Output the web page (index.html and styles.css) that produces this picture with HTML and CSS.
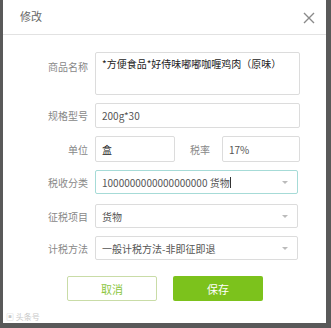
FILE: index.html
```html
<!DOCTYPE html>
<html>
<head>
    <meta charset="UTF-8">
    <title>修改</title>
    <link rel="stylesheet" href="styles.css">
</head>
<body>
    <div class="dialog">
        <div class="dialog-header">
            <span class="dialog-title">修改</span>
            <svg class="close" width="12" height="12" viewBox="0 0 12 12">
                <path d="M1 1 L11 11 M11 1 L1 11" stroke="#8a8a8a" stroke-width="1.4" fill="none"/>
            </svg>
        </div>

        <div class="form">
            <div class="row row-name">
                <label class="label">商品名称</label>
                <div class="field textarea">*方便食品*好侍味嘟嘟咖喱鸡肉（原味）</div>
            </div>

            <div class="row row-spec">
                <label class="label">规格型号</label>
                <div class="field">200g*30</div>
            </div>

            <div class="row row-unit">
                <label class="label">单位</label>
                <div class="split">
                    <div class="field unit">盒</div>
                    <label class="label-inline">税率</label>
                    <div class="field rate">17%</div>
                </div>
            </div>

            <div class="row row-class">
                <label class="label">税收分类</label>
                <div class="field select focus">1000000000000000000 货物<span class="cursor"></span><span class="caret"></span></div>
            </div>

            <div class="row row-item">
                <label class="label">征税项目</label>
                <div class="field select">货物<span class="caret"></span></div>
            </div>

            <div class="row row-method">
                <label class="label">计税方法</label>
                <div class="field select">一般计税方法-非即征即退<span class="caret"></span></div>
            </div>
        </div>

        <div class="actions">
            <a href="#" class="btn btn-cancel">取消</a>
            <a href="#" class="btn btn-save">保存</a>
        </div>

        <div class="watermark">▣ 头条号</div>
    </div>
</body>
</html>
```

FILE: styles.css
```css
* {
    margin: 0;
    padding: 0;
    box-sizing: border-box;
}

html, body {
    height: 100%;
    overflow: hidden;
}

body {
    background-color: #595959;
    font-family: "Noto Sans CJK SC", "Microsoft YaHei", sans-serif;
    font-size: 10px;
}

.dialog {
    margin-left: 3px;
    width: 323px;
    height: 323px;
    background-color: white;
    display: flex;
    flex-direction: column;
}

.dialog-header {
    height: 35px;
    border-bottom: 1px solid #e2e2e2;
    display: flex;
    align-items: center;
    justify-content: space-between;
    padding: 0 11px 2px 17px;
}

.dialog-title {
    color: #666;
    font-size: 11px;
}

.close {
    margin-top: 4px;
}

.form {
    display: flex;
    flex-direction: column;
    padding: 17px 26px 0 0;
}

.row {
    display: grid;
    grid-template-columns: 85px 205px;
    column-gap: 7px;
    align-items: center;
}

.row-name {
    align-items: start;
}

.row-spec { margin-top: 8px; }
.row-unit { margin-top: 8px; }
.row-class { margin-top: 8px; }
.row-item { margin-top: 10px; }
.row-method { margin-top: 8px; }

.label {
    color: #888;
    text-align: right;
}

.row-name .label {
    padding-top: 7px;
}

.field {
    height: 25px;
    border: 1px solid #dcdcdc;
    border-radius: 2px;
    color: #555;
    padding: 0 6px;
    display: flex;
    align-items: center;
    white-space: nowrap;
    overflow: hidden;
    position: relative;
}

.textarea {
    height: 43px;
    align-items: flex-start;
    padding-top: 3px;
    color: #222;
    white-space: normal;
}

.split {
    display: flex;
    align-items: center;
}

.unit {
    width: 80px;
    height: 26px;
    color: #222;
}

.label-inline {
    color: #888;
    margin-left: 15px;
    width: 32px;
}

.rate {
    width: 78px;
    height: 26px;
}

.select {
    width: 203px;
    height: 24px;
}

.focus {
    border-color: #a6dbd7;
}

.cursor {
    display: inline-block;
    width: 1px;
    height: 11px;
    background-color: #333;
}

.caret {
    position: absolute;
    right: 9px;
    top: 10px;
    border-left: 3px solid transparent;
    border-right: 3px solid transparent;
    border-top: 3px solid #bbb;
}

.actions {
    display: flex;
    gap: 16px;
    padding-left: 64px;
    margin-top: 16px;
}

.btn {
    width: 90px;
    height: 25px;
    border-radius: 2px;
    display: flex;
    align-items: center;
    justify-content: center;
    text-decoration: none;
    font-size: 11px;
}

.btn-cancel {
    border: 1px solid #c9dca7;
    color: #8cc63f;
    background-color: white;
}

.btn-save {
    background-color: #7cc21c;
    color: white;
}

.watermark {
    margin-top: auto;
    padding: 0 0 1px 3px;
    font-size: 8px;
    color: #c8c8c8;
}
```
